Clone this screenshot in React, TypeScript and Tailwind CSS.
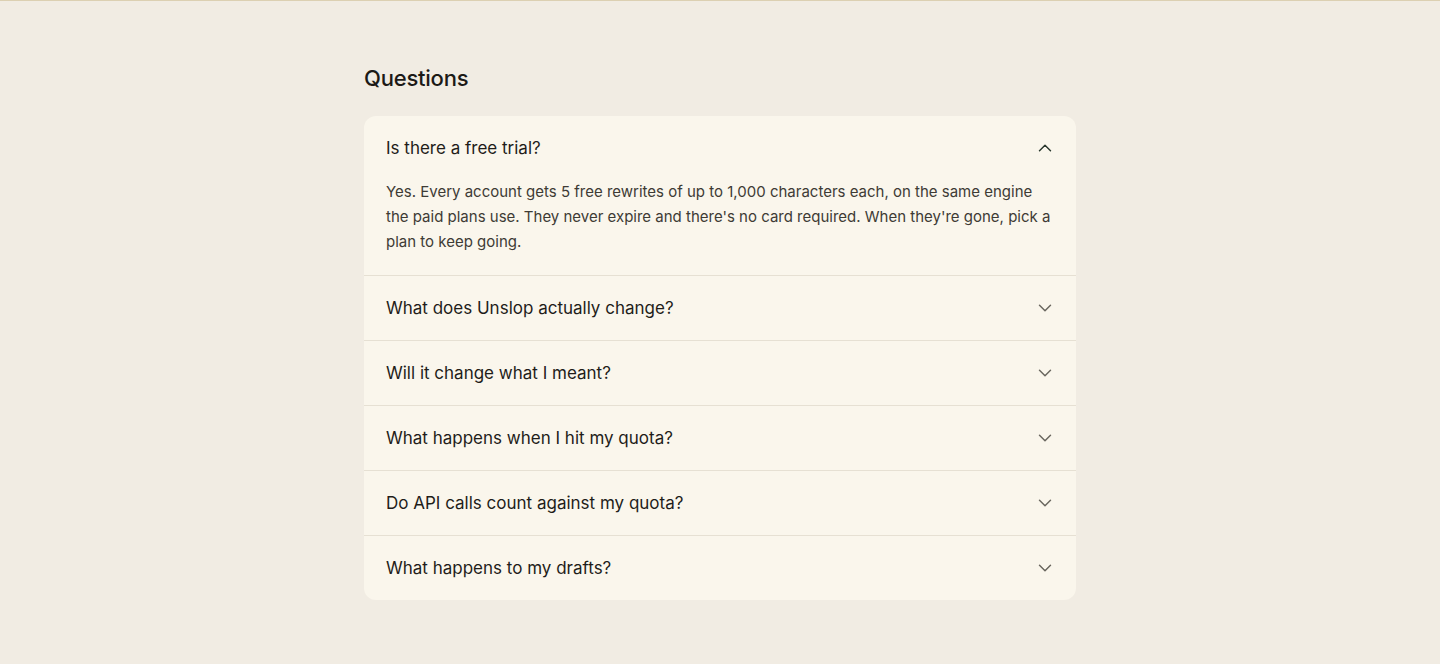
import React, { useState } from "react";

const items = [
  {
    q: "Is there a free trial?",
    a: "Yes. Every account gets 5 free rewrites of up to 1,000 characters each, on the same engine the paid plans use. They never expire and there's no card required. When they're gone, pick a plan to keep going.",
  },
  { q: "What does Unslop actually change?", a: "" },
  { q: "Will it change what I meant?", a: "" },
  { q: "What happens when I hit my quota?", a: "" },
  { q: "Do API calls count against my quota?", a: "" },
  { q: "What happens to my drafts?", a: "" },
];

function Chevron({ up }: { up: boolean }) {
  return (
    <svg
      width="22"
      height="22"
      viewBox="0 0 24 24"
      fill="none"
      stroke={up ? "#2c3a30" : "#6a675f"}
      strokeWidth="1.6"
      strokeLinecap="round"
      strokeLinejoin="round"
      className={up ? "rotate-180 shrink-0" : "shrink-0"}
    >
      <path d="m6 9 6 6 6-6" />
    </svg>
  );
}

export default function App() {
  const [open, setOpen] = useState(0);
  return (
    <div
      className="min-h-[664px] bg-[#f1ece3] border-t border-[#dcd0b2]"
      style={{ fontFamily: "Inter, 'Noto Sans', sans-serif" }}
    >
      <div className="mx-auto w-[712px] pt-[62px] pb-16">
        <h2 className="text-[22px] leading-[30px] font-medium text-[#1c1a17] tracking-[-0.01em] mb-[23px]">
          Questions
        </h2>
        <div className="rounded-[12px] bg-[#faf6ec] overflow-hidden">
          {items.map((it, i) => (
            <div key={i} className={i > 0 ? "border-t border-[#e6e0d3]" : ""}>
              <button
                onClick={() => setOpen(open === i ? -1 : i)}
                className="w-full flex items-center justify-between pl-[22px] pr-[20px] h-[64px] text-left"
              >
                <span className="text-[17px] leading-[22px] text-[#1f1d1a]">{it.q}</span>
                <Chevron up={open === i} />
              </button>
              {open === i && it.a && (
                <div className="pl-[22px] pr-[24px] pb-[21px] -mt-[1px] text-[15px] leading-[25px] text-[#3e3b35]">
                  {it.a}
                </div>
              )}
            </div>
          ))}
        </div>
      </div>
    </div>
  );
}
